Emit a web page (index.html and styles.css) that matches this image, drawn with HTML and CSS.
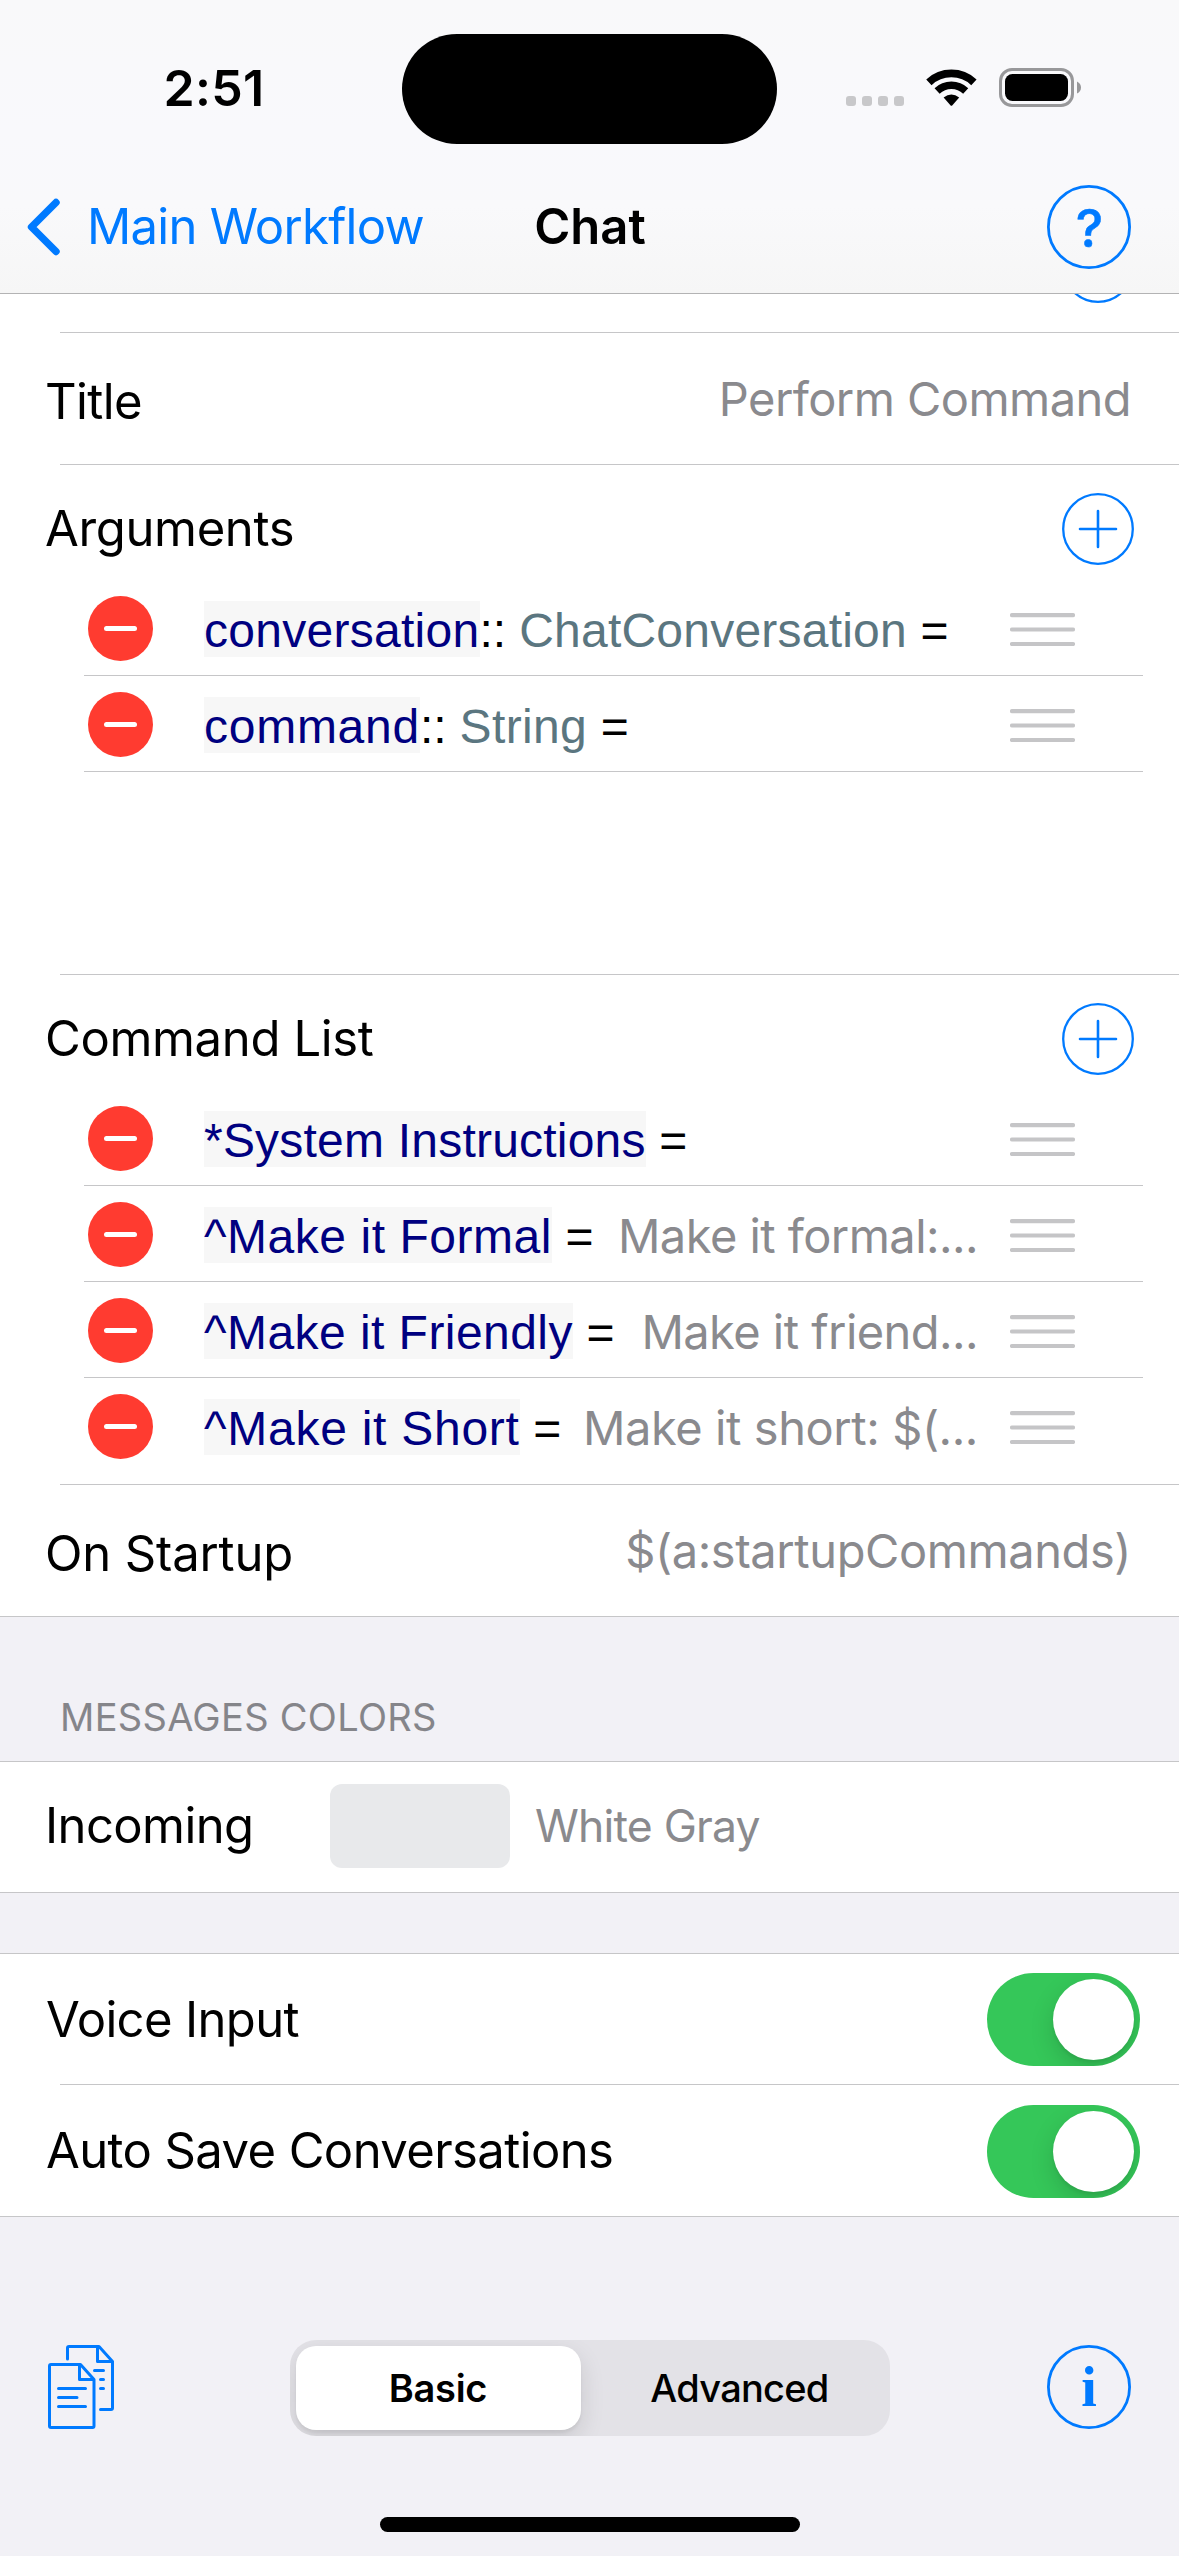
FILE: index.html
```html
<!DOCTYPE html>
<html lang="en">
<head>
<meta charset="utf-8">
<title>Chat</title>
<link rel="stylesheet" href="styles.css">
</head>
<body>
<svg class="defs" aria-hidden="true">
  <symbol id="plus" viewBox="0 0 72 72"><circle cx="36" cy="36" r="34.8" fill="none" stroke="#007aff" stroke-width="2.3"/><path d="M18 36H54M36 18V54" stroke="#007aff" stroke-width="2.6" stroke-linecap="round"/></symbol>
  <symbol id="minus" viewBox="0 0 65 65"><circle cx="32.5" cy="32.5" r="32.5" fill="#ff3b30"/><path d="M18.5 32.5H46.5" stroke="#fff" stroke-width="5" stroke-linecap="round"/></symbol>
  <symbol id="grip" viewBox="0 0 65 33"><path d="M2 2.2H63M2 16.5H63M2 31H63" stroke="#c5c5c7" stroke-width="4.2" stroke-linecap="round"/></symbol>
</svg>
<header class="top">
  <div class="status">
    <div class="time">2:51</div>
    <div class="island"></div>
    <div class="indicators">
      <div class="signal"><i></i><i></i><i></i><i></i></div>
      <svg class="wifi" width="51" height="38" viewBox="0 0 51 38"><path d="M2.9 13.3A33 33 0 0 1 47.9 13.3" fill="none" stroke="#000" stroke-width="7.8"/><path d="M11.1 22A20.8 20.8 0 0 1 39.7 22" fill="none" stroke="#000" stroke-width="7.4"/><path d="M17.6 28.6Q25.4 22.6 33.2 28.6L26.2 36.4Q25.4 37.2 24.6 36.4Z"/></svg>
      <svg class="battery" width="83" height="39" viewBox="0 0 83 39"><rect x="1.5" y="1.5" width="72" height="36" rx="11.5" fill="none" stroke="#98989a" stroke-width="3"/><rect x="6" y="6" width="63" height="27" rx="7.5"/><path d="M78 13.5Q82 15.5 82 19.5T78 25.5Z" fill="#98989a"/></svg>
    </div>
  </div>
  <nav class="nav">
    <a class="back"><svg width="34" height="58" viewBox="0 0 34 58"><path d="M29 4.5L4.5 29L29 53.5" fill="none" stroke="#007aff" stroke-width="7.4" stroke-linecap="round" stroke-linejoin="round"/></svg><span>Main Workflow</span></a>
    <h1>Chat</h1>
    <svg class="help" width="84" height="84" viewBox="0 0 84 84"><circle cx="42" cy="42" r="40.6" fill="none" stroke="#007aff" stroke-width="2.8"/><text class="q" x="42.5" y="61.5" text-anchor="middle">?</text></svg>
  </nav>
</header>
<main>
  <div class="peek"><svg width="72" height="72"><use href="#plus"/></svg></div>
  <hr class="inset">
  <div class="row tall low"><span class="label t-60">Title</span><span class="value">Perform Command</span></div>
  <hr class="inset">
  <section class="group">
    <div class="head"><span class="label t-35">Arguments</span><svg width="72" height="72"><use href="#plus"/></svg></div>
    <ul>
      <li><svg width="65" height="65"><use href="#minus"/></svg><div class="entry"><span class="key t28">conversation</span><span class="op">::</span><span class="type t27">ChatConversation</span><span class="eq">=</span></div><svg class="grip" width="65" height="33"><use href="#grip"/></svg></li>
      <li><svg width="65" height="65"><use href="#minus"/></svg><div class="entry"><span class="key t74">command</span><span class="op">::</span><span class="type t36">String</span><span class="eq">=</span></div><svg class="grip" width="65" height="33"><use href="#grip"/></svg></li>
    </ul>
  </section>
  <hr class="inset">
  <section class="group commands">
    <div class="head"><span class="label t-35">Command List</span><svg width="72" height="72"><use href="#plus"/></svg></div>
    <ul>
      <li><svg width="65" height="65"><use href="#minus"/></svg><div class="entry"><span class="key t21">*System Instructions</span><span class="eq">=</span></div><svg class="grip" width="65" height="33"><use href="#grip"/></svg></li>
      <li><svg width="65" height="65"><use href="#minus"/></svg><div class="entry"><span class="key t54">^Make it Formal</span><span class="eq">=</span><span class="value">Make it formal:...</span></div><svg class="grip" width="65" height="33"><use href="#grip"/></svg></li>
      <li><svg width="65" height="65"><use href="#minus"/></svg><div class="entry"><span class="key t45">^Make it Friendly</span><span class="eq">=</span><span class="value">Make it friend...</span></div><svg class="grip" width="65" height="33"><use href="#grip"/></svg></li>
      <li><svg width="65" height="65"><use href="#minus"/></svg><div class="entry"><span class="key t74">^Make it Short</span><span class="eq">=</span><span class="value t-42">Make it short: $(...</span></div><svg class="grip" width="65" height="33"><use href="#grip"/></svg></li>
    </ul>
  </section>
  <hr class="inset">
  <div class="row tall low"><span class="label t-15">On Startup</span><span class="value t-42">$(a:startupCommands)</span></div>
  <hr>
  <h2>MESSAGES COLORS</h2>
  <hr>
  <div class="row color"><span class="label t-60">Incoming</span><span class="swatch"></span><span class="swatch-name">White Gray</span></div>
  <hr>
  <div class="gap"></div>
  <hr>
  <div class="row switchrow"><span class="label t-65">Voice Input</span><span class="switch"><i></i></span></div>
  <hr class="inset">
  <div class="row tall switchrow"><span class="label t-60">Auto Save Conversations</span><span class="switch"><i></i></span></div>
  <hr>
</main>
<footer>
  <div class="toolbar">
    <svg class="docs" width="66" height="84" viewBox="0 0 66 84" fill="none" stroke="#007aff" stroke-width="3" stroke-linecap="round" stroke-linejoin="round"><path d="M32.5 19.5H3Q1.5 19.5 1.5 21V81Q1.5 82.5 3 82.5H44.5Q46 82.5 46 81V34.5ZM31.5 20V34.5H45.5M10.5 43.5H37.5M10.5 52.5H29M10.5 61.5H37.5"/><path d="M19.5 14V3Q19.5 1.5 21 1.5H51L64.5 16.5V63Q64.5 64.5 63 64.5H52.5M49.5 2V16.5H64"/><path d="M46.5 25.5H55.5M52.5 34.5H55.5M52.5 43.5H55.5"/></svg>
    <div class="segmented"><span class="on">Basic</span><span class="off">Advanced</span></div>
    <svg class="info" width="84" height="84" viewBox="0 0 84 84"><circle cx="42" cy="42" r="40.6" fill="none" stroke="#007aff" stroke-width="2.8"/><text class="i" x="42" y="61" text-anchor="middle">i</text></svg>
  </div>
  <div class="home"></div>
</footer>
</body>
</html>
```
FILE: styles.css
```css
* { box-sizing: border-box; margin: 0; padding: 0; }
body { width: 1179px; height: 2556px; overflow: hidden; background: #f2f1f6; color: #000; font: 49px/60px Inter, sans-serif; white-space: nowrap; }
svg { display: block; flex: none; }
.defs { position: absolute; width: 0; height: 0; }
hr { border: 0; height: 1px; background: #c6c6c8; }
hr.inset { margin-left: 60px; }
ul { list-style: none; }

/* Letter tracking */
.t-65 { letter-spacing: -.65px; }
.t-60 { letter-spacing: -.6px; }
.t-35 { letter-spacing: -.35px; }
.t-15 { letter-spacing: -.15px; }
.value.t-42 { letter-spacing: -.42px; }
.t21 { letter-spacing: .21px; }
.t27 { letter-spacing: .22px; }
.t28 { letter-spacing: .28px; }
.t36 { letter-spacing: .36px; }
.t45 { letter-spacing: .45px; }
.t54 { letter-spacing: .54px; }
.t74 { letter-spacing: .74px; }

/* Status bar and navigation */
.top { height: 294px; padding-top: 34px; background: linear-gradient(#f9f9fa 0, #f9f9fc 45%, #f9f9fb 70%, #f6f6f6 100%); border-bottom: 1px solid #b3b3b4; }
.status { display: grid; grid-template-columns: 402px 375px 402px; height: 110px; }
.time { padding-left: 26px; text-align: center; font-size: 50px; font-weight: 600; line-height: 108px; letter-spacing: .3px; }
.island { background: #000; border-radius: 55px; }
.indicators { display: flex; align-items: flex-end; padding: 0 0 38px 69px; }
.signal { display: flex; gap: 6px; width: 80px; }
.signal i { width: 10px; height: 10px; border-radius: 3px; background: #c8c8ca; }
.wifi { margin-bottom: -1px; }
.battery { margin: 0 0 -1px 22px; }
.nav { display: grid; grid-template-columns: 1fr auto 1fr; align-items: center; height: 133px; margin-top: 16px; padding: 0 48px 0 27px; }
.back { display: flex; align-items: center; gap: 26px; width: 480px; color: #007aff; letter-spacing: -.72px; }
h1 { font-size: 49px; font-weight: 600; line-height: 60px; position: relative; left: 11px; }
.help { justify-self: end; }
.q { font: 500 52px Inter, sans-serif; fill: #007aff; stroke: #007aff; stroke-width: .5px; }
.i { font: bold 56px "Liberation Serif", serif; fill: #007aff; }

/* Form rows */
main { background: #fff; }
.peek { display: flex; justify-content: flex-end; align-items: flex-start; height: 38px; padding-right: 45px; overflow: hidden; }
.peek svg { margin-top: -63px; }
.row { display: flex; align-items: center; justify-content: space-between; height: 130px; padding: 0 48px 0 45px; }
.tall { height: 131px; }
.low .label { padding-top: 6px; }
.value { color: #8a8a8e; font: 47px/58px Inter, sans-serif; letter-spacing: -.55px; }
.head { display: flex; justify-content: space-between; align-items: center; height: 115px; padding: 13px 45px 0 45px; }
.group { height: 509px; }
li { display: flex; align-items: center; height: 96px; margin: 0 36px 0 84px; padding: 2px 0 0 4px; border-bottom: 1px solid #c6c6c8; }
.commands li:last-child { border-bottom-color: transparent; }
.entry { display: flex; align-items: baseline; width: 774px; margin: 0 32px 0 51px; font: 48px/53px "Liberation Sans", sans-serif; }
.entry .value { flex: 1; text-align: right; line-height: 53px; }
.key { padding-top: 3px; background: #f7f7f7; color: #000080; }
.type { margin-left: 13px; color: #5b7680; }
.eq { margin-left: 13.5px; }
.grip { margin-top: 2px; }
h2 { height: 144px; padding: 77px 0 0 60px; background: #f2f1f6; color: #85858a; font-size: 38px; font-weight: 400; line-height: 46px; letter-spacing: .3px; }
.color { justify-content: flex-start; padding-bottom: 3px; }
.color .label { width: 285px; }
.swatch { width: 180px; height: 84px; border-radius: 12px; background: #e8e9eb; }
.swatch-name { margin-left: 25px; color: #8a8a8e; font-size: 44.5px; letter-spacing: -.8px; }
.gap { height: 60px; background: #f2f1f6; }
.switchrow { padding: 1px 39px 0 46px; }
.switch { display: flex; justify-content: flex-end; width: 153px; height: 93px; padding: 6px; border-radius: 47px; background: #35c759; overflow: hidden; }
.switch i { width: 81px; height: 81px; border-radius: 50%; background: #fff; box-shadow: 0 9px 24px rgba(0, 0, 0, .15), 0 3px 3px rgba(0, 0, 0, .06); }

/* Bottom toolbar */
footer { height: 339px; padding-top: 123px; }
.toolbar { display: flex; justify-content: space-between; align-items: center; height: 96px; padding: 0 48px; }
.docs, .info { margin-bottom: 2px; }
.segmented { display: flex; width: 600px; height: 96px; padding: 6px; border-radius: 26px; background: #e3e2e7; font-size: 38px; line-height: 84px; text-align: center; overflow: hidden; position: relative; left: 9px; }
.on { width: 285px; border-radius: 20px; background: #fff; box-shadow: 0 9px 24px rgba(0, 0, 0, .12), 0 3px 3px rgba(0, 0, 0, .05); font-weight: 600; letter-spacing: -.3px; }
.off { flex: 1; padding-left: 15px; font-weight: 500; letter-spacing: -.74px; }
.home { width: 420px; height: 15px; margin: 81px auto 0; border-radius: 8px; background: #000; }
```
